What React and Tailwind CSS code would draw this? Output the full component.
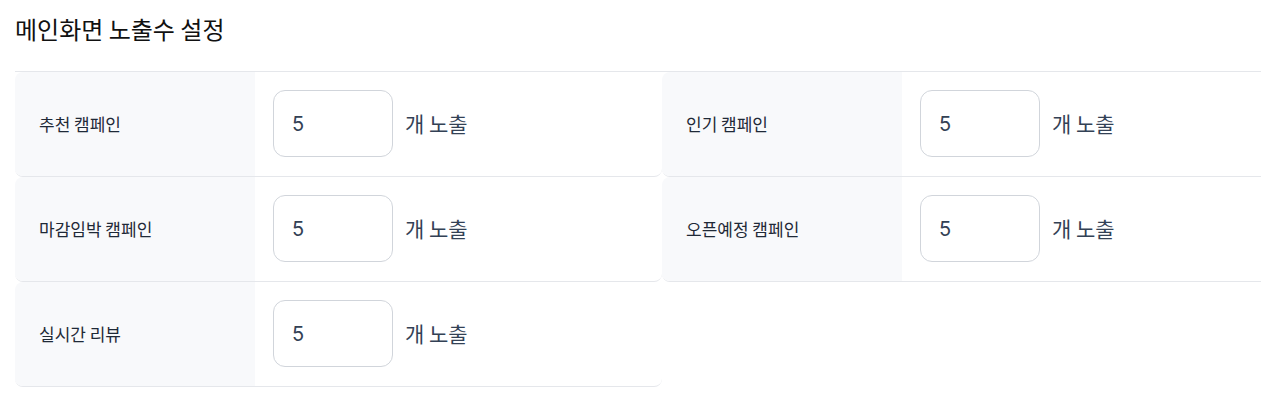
import React from "react";

const items = [
  "추천 캠페인",
  "인기 캠페인",
  "마감임박 캠페인",
  "오픈예정 캠페인",
  "실시간 리뷰",
];

function Cell({ label }) {
  return (
    <div className="flex rounded-lg border-b border-[#e5e7eb] overflow-hidden bg-white">
      <div className="w-[240px] shrink-0 bg-[#f8f9fb] flex items-center pl-6 text-[17px] text-[#1f2937]">
        {label}
      </div>
      <div className="flex items-center pt-[18px] pb-[19px] pl-[18px]">
        <input
          defaultValue="5"
          className="w-[120px] h-[67px] rounded-xl border border-[#d1d5db] bg-white pl-[18px] text-[20px] text-[#334155] outline-none"
          style={{ fontFamily: "Inter, 'Noto Sans', sans-serif" }}
        />
        <span className="ml-3 text-[21px] text-[#334155]">개 노출</span>
      </div>
    </div>
  );
}

export default function App() {
  return (
    <div
      className="w-full overflow-hidden bg-white pl-[15px] pt-[13px] pb-4"
      style={{ fontFamily: "'Noto Sans CJK KR', 'Noto Sans', sans-serif" }}
    >
      <h1 className="text-[24px] leading-[32px] text-[#111111] mb-[26px]">
        메인화면 노출수 설정
      </h1>
      <div className="border-t border-[#e5e7eb] grid grid-cols-[647px_647px] w-[1294px]">
        {items.map((l) => (
          <Cell key={l} label={l} />
        ))}
      </div>
    </div>
  );
}
